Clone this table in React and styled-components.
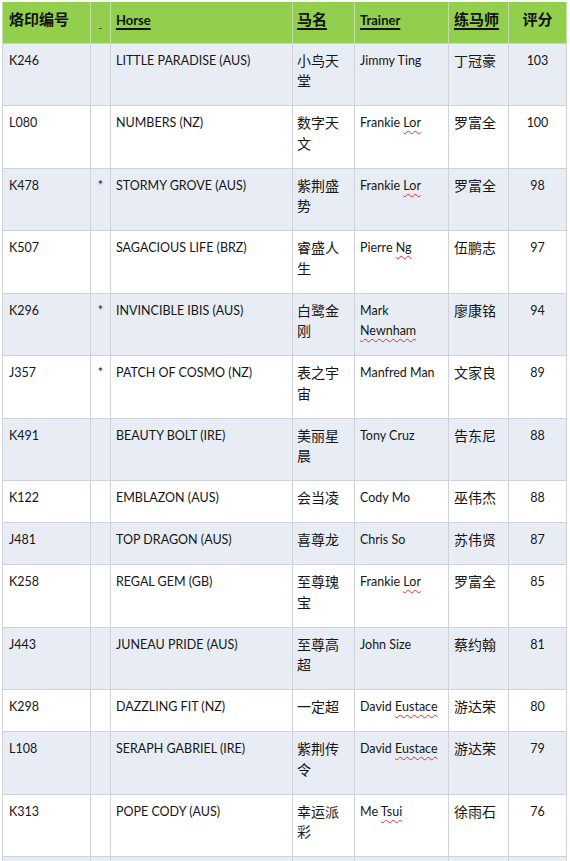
import React from 'react';
import styled, { createGlobalStyle } from 'styled-components';

const Global = createGlobalStyle`
  html, body { margin: 0; padding: 0; background: #ffffff; }
  body { font-family: Lato, "Noto Sans CJK SC", sans-serif; }
`;

const Page = styled.div`
  padding: 2px 4px 0 2px;
  width: 570px;
  box-sizing: border-box;
`;

const Table = styled.table`
  border-collapse: collapse;
  table-layout: fixed;
  width: 564px;
  color: #161616;
`;

const HeadRow = styled.tr`
  background: #91cf4c;
  height: 41px;
`;

const Th = styled.th`
  border: 1px solid #c4dca6;
  border-top: none;
  padding: 0 5px 6px ${(p) => p.$pl || 5}px;
  text-align: ${(p) => p.$align || 'left'};
  font-family: "Noto Sans CJK SC", Lato, sans-serif;
  font-weight: 700;
  font-size: ${(p) => p.$size || 14}px;
  line-height: 22px;
  color: #111111;
  vertical-align: middle;
  white-space: nowrap;
`;

const HeadLabel = styled.span`
  text-decoration: ${(p) => (p.$under ? 'underline' : 'none')};
  text-decoration-thickness: 1.5px;
  text-underline-offset: 3px;
  font-family: ${(p) => (p.$latin ? 'Lato, sans-serif' : '"Noto Sans CJK SC", sans-serif')};
  font-size: ${(p) => (p.$latin ? 13 : 15)}px;
`;

const Dash = styled.span`
  display: inline-block;
  font-size: 10px;
  transform: translateY(7px);
  font-weight: 400;
`;

const Row = styled.tr`
  background: ${(p) => (p.$alt ? '#e8edf5' : '#ffffff')};
`;

const Td = styled.td`
  border: 1px solid #cfd3d9;
  padding: ${(p) => (p.$cjk ? '6px 4px 14.5px' : '7px 4px 13.5px')};
  padding-left: ${(p) => p.$pl || 5}px;
  vertical-align: top;
  text-align: ${(p) => p.$align || 'left'};
  font-family: ${(p) =>
    p.$cjk ? '"Noto Sans CJK SC", sans-serif' : 'Lato, "Noto Sans CJK SC", sans-serif'};
  font-size: ${(p) => (p.$cjk ? 14 : 12.5)}px;
  line-height: 20.5px;
  white-space: pre-line;
  overflow: hidden;
`;

const Flag = styled.span`
  text-decoration: underline wavy #e0302c;
  text-decoration-thickness: 1px;
  text-underline-offset: 3px;
  text-decoration-skip-ink: none;
`;

const rows = [
  ['K246', '', 'LITTLE PARADISE (AUS)', '小鸟天\n堂', ['Jimmy Ting'], '丁冠豪', '103'],
  ['L080', '', 'NUMBERS (NZ)', '数字天\n文', ['Frankie ', { f: 'Lor' }], '罗富全', '100'],
  ['K478', '*', 'STORMY GROVE (AUS)', '紫荆盛\n势', ['Frankie ', { f: 'Lor' }], '罗富全', '98'],
  ['K507', '', 'SAGACIOUS LIFE (BRZ)', '睿盛人\n生', ['Pierre ', { f: 'Ng' }], '伍鹏志', '97'],
  ['K296', '*', 'INVINCIBLE IBIS (AUS)', '白鹭金\n刚', ['Mark\n', { f: 'Newnham' }], '廖康铭', '94'],
  ['J357', '*', 'PATCH OF COSMO (NZ)', '表之宇\n宙', ['Manfred Man'], '文家良', '89'],
  ['K491', '', 'BEAUTY BOLT (IRE)', '美丽星\n晨', ['Tony Cruz'], '告东尼', '88'],
  ['K122', '', 'EMBLAZON (AUS)', '会当凌', ['Cody Mo'], '巫伟杰', '88'],
  ['J481', '', 'TOP DRAGON (AUS)', '喜尊龙', ['Chris So'], '苏伟贤', '87'],
  ['K258', '', 'REGAL GEM (GB)', '至尊瑰\n宝', ['Frankie ', { f: 'Lor' }], '罗富全', '85'],
  ['J443', '', 'JUNEAU PRIDE (AUS)', '至尊高\n超', ['John Size'], '蔡约翰', '81'],
  ['K298', '', 'DAZZLING FIT (NZ)', '一定超', ['David ', { f: 'Eustace' }], '游达荣', '80'],
  ['L108', '', 'SERAPH GABRIEL (IRE)', '紫荆传\n令', ['David ', { f: 'Eustace' }], '游达荣', '79'],
  ['K313', '', 'POPE CODY (AUS)', '幸运派\n彩', ['Me ', { f: 'Tsui' }], '徐雨石', '76'],
  ['', '', '', '', [''], '', ''],
];

const widths = [88, 20, 182, 62, 94, 60, 58];

function Trainer({ parts }) {
  return parts.map((p, i) =>
    typeof p === 'string' ? <React.Fragment key={i}>{p}</React.Fragment> : <Flag key={i}>{p.f}</Flag>
  );
}

export default function App() {
  return (
    <Page>
      <Global />
      <Table>
        <colgroup>
          {widths.map((w, i) => (
            <col key={i} style={{ width: w }} />
          ))}
        </colgroup>
        <thead>
          <HeadRow>
            <Th $pl={6}><HeadLabel>烙印编号</HeadLabel></Th>
            <Th $align="center"><Dash>-</Dash></Th>
            <Th><HeadLabel $under $latin>Horse</HeadLabel></Th>
            <Th $pl={4}><HeadLabel $under>马名</HeadLabel></Th>
            <Th><HeadLabel $under $latin>Trainer</HeadLabel></Th>
            <Th><HeadLabel $under>练马师</HeadLabel></Th>
            <Th $align="center"><HeadLabel>评分</HeadLabel></Th>
          </HeadRow>
        </thead>
        <tbody>
          {rows.map((r, i) => (
            <Row key={i} $alt={i % 2 === 0}>
              <Td $pl={6}>{r[0]}</Td>
              <Td $align="center" $pl={4}>{r[1]}</Td>
              <Td>{r[2]}</Td>
              <Td $cjk $pl={4}>{r[3]}</Td>
              <Td><Trainer parts={r[4]} /></Td>
              <Td $cjk>{r[5]}</Td>
              <Td $align="center" $pl={4}>{r[6]}</Td>
            </Row>
          ))}
        </tbody>
      </Table>
    </Page>
  );
}
